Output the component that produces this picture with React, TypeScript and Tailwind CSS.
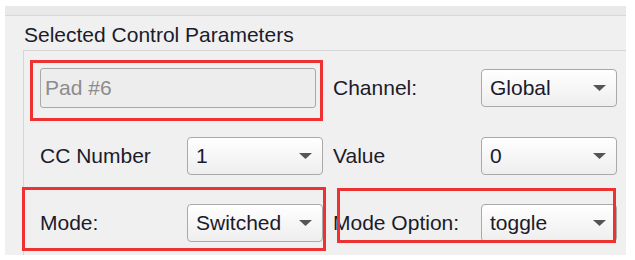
import React from "react";

const font = { fontFamily: '"Liberation Sans", Arial, sans-serif' };

function Select({ value }: { value: string }) {
  return (
    <div className="flex h-[38px] w-[136px] items-center justify-between rounded-[4px] border border-[#a9a9a9] bg-gradient-to-b from-white to-[#eeeeee] pl-[8px] pr-[10px] text-[21px] text-[#1b1b2b]">
      <span>{value}</span>
      <svg width="13" height="6" viewBox="0 0 13 6">
        <polygon points="0,0 13,0 6.5,6" fill="#555" />
      </svg>
    </div>
  );
}

function Label({ children }: { children: React.ReactNode }) {
  return <div className="text-[21px] text-[#1b1b2b]">{children}</div>;
}

export default function App() {
  return (
    <div className="relative h-[260px] w-[635px] bg-white" style={font}>
      <div className="absolute left-0 top-0 pl-[5px] pt-[6px]">
        <div className="flex h-[249px] w-[621px] flex-col bg-[#f0f0f0]">
          <div className="h-[10px] border-b border-[#d8d8d8] bg-[#e9e9e9]" />
          <div className="pl-[19px] pt-[7px] text-[21px] leading-[24px] text-[#1b1b2b]">
            Selected Control Parameters
          </div>
          <div className="ml-[18px] mt-[3px] flex-1 border-l border-t border-[#d6d6d6] pl-[16px] pt-[17px]">
            <div className="grid grid-cols-[147px_146px_148px_136px] grid-rows-[40px_38px_38px] items-center gap-y-[29px]">
              <div className="col-span-2 flex h-[40px] w-[276px] items-center rounded-[3px] border border-[#a9a9a9] bg-[#ededed] pl-[4px] text-[21px] text-[#8c8c8c]">
                Pad #6
              </div>
              <Label>Channel:</Label>
              <Select value="Global" />
              <Label>CC Number</Label>
              <div className="w-[134px]">
                <Select value="1" />
              </div>
              <Label>Value</Label>
              <Select value="0" />
              <Label>Mode:</Label>
              <div className="w-[134px]">
                <Select value="Switched" />
              </div>
              <Label>Mode Option:</Label>
              <Select value="toggle" />
            </div>
          </div>
        </div>
      </div>
      <div className="pointer-events-none absolute left-[30px] top-[60px] h-[61px] w-[293px] border-[3px] border-[#ee3232]" />
      <div className="pointer-events-none absolute left-[22px] top-[187px] h-[64px] w-[304px] border-[3px] border-[#ee3232]" />
      <div className="pointer-events-none absolute left-[337px] top-[188px] h-[55px] w-[279px] border-[3px] border-[#ee3232]" />
    </div>
  );
}
